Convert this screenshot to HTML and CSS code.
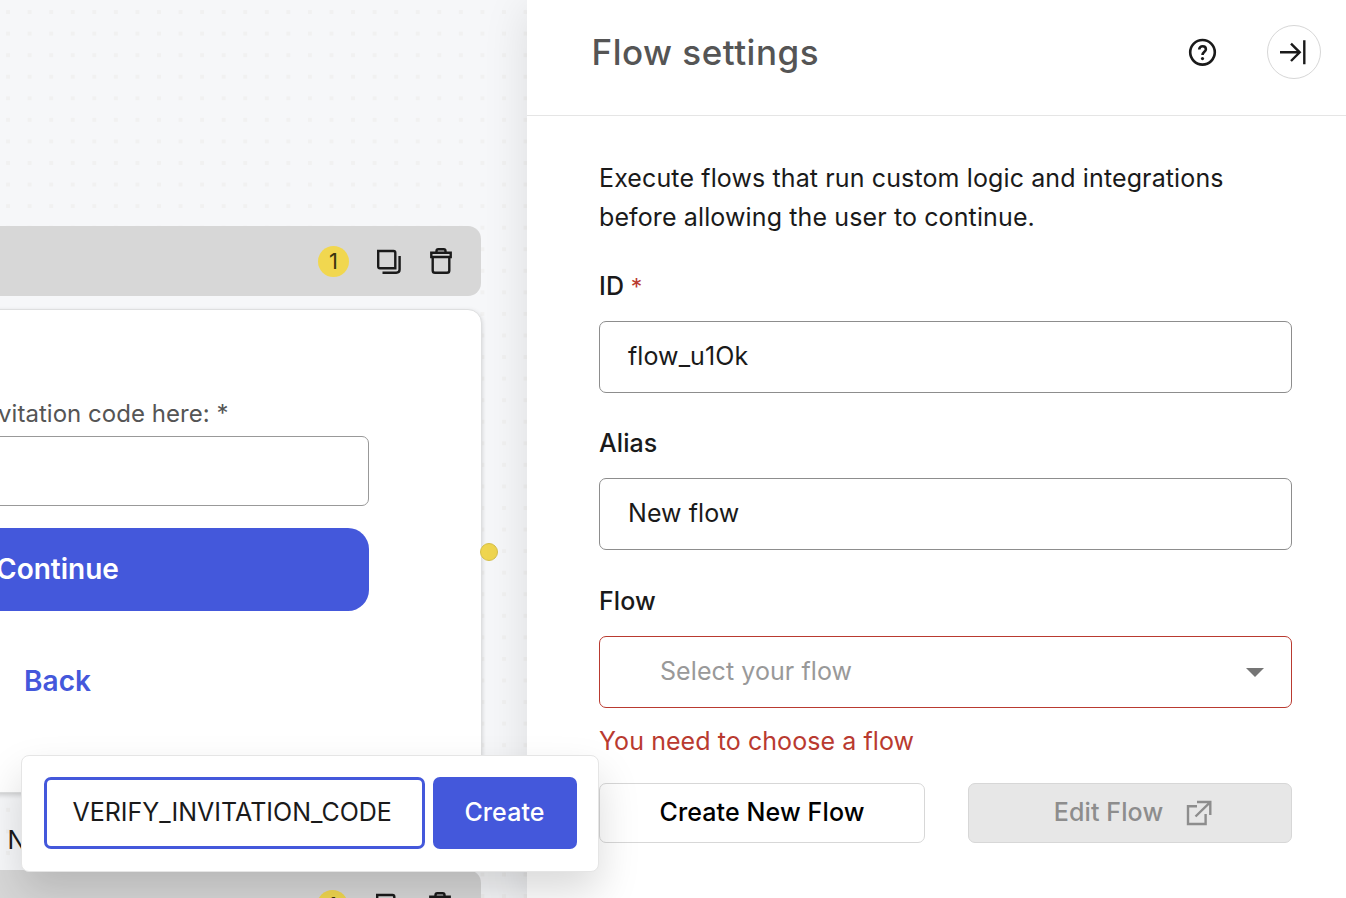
FILE: index.html
```
<!DOCTYPE html>
<html lang="en">
<head>
<meta charset="utf-8">
<title>Flow settings</title>
<link rel="stylesheet" href="styles.css">
</head>
<body>
<svg class="defs" width="0" height="0">
  <symbol id="copy" viewBox="0 0 24 25">
    <path d="M1.200 2H16.500Q18.300 2 18.300 3.800V19.300H3Q1.200 19.300 1.200 17.500Z"/>
    <path d="M22.600 7V20.500Q22.600 23.700 19.300 23.700H5.500"/>
  </symbol>
  <symbol id="trash" viewBox="0 0 22 26">
    <path d="M6.500 4.500V3Q6.500 1.200 8.300 1.200H13.700Q15.500 1.200 15.500 3V4.500M1.300 4.700H20.700V9H1.300ZM2.700 9V22.500Q2.700 24.800 5 24.800H17Q19.300 24.800 19.300 22.500V9"/>
  </symbol>
</svg>
<div class="app">
  <main class="canvas">
    <section class="node node-form">
      <header class="node-bar">
        <span class="badge">1</span>
        <svg class="icon-copy"><use href="#copy"/></svg>
        <svg class="icon-trash"><use href="#trash"/></svg>
      </header>
      <div class="card">
        <div class="card-label">vitation code here: *</div>
        <div class="card-input"></div>
        <button class="card-button">Continue</button>
        <a class="card-link">Back</a>
      </div>
      <span class="port"></span>
    </section>
    <section class="node node-next">
      <div class="node-title">N</div>
      <header class="node-bar">
        <span class="badge">1</span>
        <svg class="icon-copy"><use href="#copy"/></svg>
        <svg class="icon-trash"><use href="#trash"/></svg>
      </header>
    </section>
  </main>
  <aside class="panel">
    <header class="panel-head">
      <h1 class="panel-title">Flow settings</h1>
      <svg class="icon-help" viewBox="0 0 28 28"><circle cx="14.500" cy="14.300" r="12.300"/><path d="M11.200 11.600C11.200 9.500 12.700 8.300 14.600 8.300S17.900 9.500 17.900 11.300C17.900 13.700 14.500 13.900 14.500 17"/><circle class="dot" cx="14.500" cy="20.600" r="1.600"/></svg>
      <button class="collapse"><svg viewBox="0 0 28 26" width="28" height="26"><path d="M0 13.300H19.500M11 4.600L19.700 13.300L11 22M24.300 1.300V25.300"/></svg></button>
    </header>
    <div class="panel-body">
      <p class="intro">Execute flows that run custom logic and integrations<br>before allowing the user to continue.</p>
      <label class="label">ID <span class="req">*</span></label>
      <div class="field">flow_u1Ok</div>
      <label class="label">Alias</label>
      <div class="field field-alias">New flow</div>
      <label class="label">Flow</label>
      <div class="field select"><span>Select your flow</span><svg viewBox="0 0 18 9" width="18" height="9"><path d="M0 0H18L9 9Z"/></svg></div>
      <div class="error">You need to choose a flow</div>
      <div class="actions">
        <button class="action create-flow">Create New Flow</button>
        <button class="action edit-flow"><span>Edit Flow</span><svg viewBox="0 0 26 26" width="26" height="26"><path d="M11 6.200H2V24H19.600V14M11 2H24.300V15M24 2.300L9.500 16.500"/></svg></button>
      </div>
    </div>
  </aside>
  <div class="popover">
    <div class="popover-input">VERIFY_INVITATION_CODE</div>
    <button class="popover-button">Create</button>
  </div>
</div>
</body>
</html>
```
FILE: styles.css
```
* { box-sizing: border-box; }
body { margin: 0; font-family: Inter, "Liberation Sans", sans-serif; font-size: 25px; color: #1a1a1a; }
button { font: inherit; border: 0; padding: 0; margin: 0; }
svg { fill: none; stroke: #1a1a1a; stroke-width: 2.4; flex: none; overflow: visible; }
.defs { position: absolute; }
.app { position: relative; display: flex; width: 1346px; height: 898px; overflow: hidden; }

/* Flow canvas */
.canvas {
  position: relative; width: 527px; height: 898px; overflow: hidden;
  background: conic-gradient(from 90deg at 17.570px 17.570px, #f1f1f1 90deg, #f6f7f9 0) -11.570px -7.570px / 21.570px 21.570px;
}
.node { position: absolute; left: -367px; width: 848px; }
.node-form { top: 226px; }
.node-next { top: 820px; }
.node-bar { display: flex; align-items: center; justify-content: flex-end; height: 70px; padding-right: 29px; border-radius: 13px; background: #d7d7d7; }
.node-next .node-bar { margin-top: 10px; padding-right: 30px; }
.badge { width: 31px; height: 31px; border-radius: 50%; background: #f1d74f; color: #3b350f; font-size: 22px; line-height: 31px; text-align: center; margin-right: 28px; }
.icon-copy { width: 24px; height: 25px; margin-right: 29px; }
.icon-trash { width: 22px; height: 26px; }
.card { width: 849px; height: 484px; margin-top: 13px; padding: 86px 112px 0; border: 1px solid #dedfe0; border-radius: 14px; background: #fff; box-shadow: 0 2px 5px #0000002b; display: flex; flex-direction: column; }
.card-label { height: 36px; line-height: 36px; padding-left: 252px; color: #555; font-size: 24px; letter-spacing: .04px; white-space: nowrap; }
.card-input { height: 70px; margin-top: 4.400px; border: 1px solid #999; border-radius: 7px; }
.card-button { height: 83px; margin-top: 21.600px; border-radius: 21px; background: #4458db; color: #fff; font-size: 28px; font-weight: 600; padding-bottom: 1px; }
.card-link { margin-top: 50px; line-height: 40px; text-align: center; color: #4458db; font-size: 28px; font-weight: 600; }
.port { position: absolute; left: 847px; top: 317px; width: 18px; height: 18px; border-radius: 50%; background: #efd54f; border: 1px solid #d5bf4b; }
.node-title { height: 40px; line-height: 40px; padding-left: 374.500px; }

/* Settings panel */
.panel { position: relative; width: 819px; background: #fff; box-shadow: 0 8px 43px #0000001c; }
.panel-head { display: flex; align-items: center; height: 116px; padding: 0 25px 12px 64px; border-bottom: 1px solid #e5e5e5; }
.panel-title { flex: 1; margin: 0; padding-left: .5px; color: #555; font-size: 35px; font-weight: 500; letter-spacing: .5px; }
.icon-help { width: 28px; height: 28px; margin-right: 51px; stroke-width: 2.600; }
.icon-help .dot { fill: #1a1a1a; stroke: none; }
.collapse { display: grid; place-items: center; width: 54px; height: 54px; border: 1px solid #d7d7d7; border-radius: 50%; background: #fff; }
.panel-body { padding: 43px 54px 0 72px; }
.intro { margin: 0 0 29px; line-height: 39px; letter-spacing: .12px; white-space: nowrap; }
.label { display: block; height: 40px; line-height: 40px; margin-bottom: 15px; font-weight: 500; letter-spacing: .08px; }
.req { color: #b93a30; font-weight: 400; font-size: 23px; }
.field { display: flex; align-items: center; height: 72px; margin-bottom: 30px; padding: 0 28px 2px; border: 1px solid #8d8d8d; border-radius: 7px; letter-spacing: .08px; }
.field-alias { margin-bottom: 31px; }
.select { justify-content: space-between; padding-left: 60px; padding-right: 27px; margin-bottom: 13px; border-color: #b93a30; color: #999; }
.select svg { fill: #757575; stroke: none; margin-top: 2px; }
.error { height: 40px; line-height: 40px; margin-bottom: 22px; color: #b93a30; letter-spacing: .07px; }
.actions { display: flex; justify-content: space-between; }
.action { height: 60px; padding-bottom: 2px; border: 1px solid #d7d7d7; border-radius: 7px; font-weight: 500; letter-spacing: .12px; }
.create-flow { width: 326px; background: #fff; color: #000; }
.edit-flow { display: flex; align-items: center; justify-content: center; gap: 23px; width: 324px; padding-left: 6px; background: #e7e7e7; color: #8d8d8d; }
.edit-flow svg { stroke: #8d8d8d; margin-top: 2px; }

/* Name prompt shown above canvas and panel */
.popover { position: absolute; left: 21px; top: 755px; display: flex; gap: 8px; width: 578px; height: 117px; padding: 21px 21px 21px 22px; background: #fff; border: 1px solid #e5e5e5; border-radius: 8px; box-shadow: 0 20px 42px #00000026; }
.popover-input { flex: none; width: 381px; height: 72px; padding-left: 25.500px; border: 3px solid #4458db; border-radius: 7px; line-height: 64px; white-space: nowrap; }
.popover-button { flex: none; width: 144px; height: 72px; padding: 0 1px 2px 0; border-radius: 7px; background: #4458db; color: #fff; font-weight: 500; letter-spacing: .1px; }
```
